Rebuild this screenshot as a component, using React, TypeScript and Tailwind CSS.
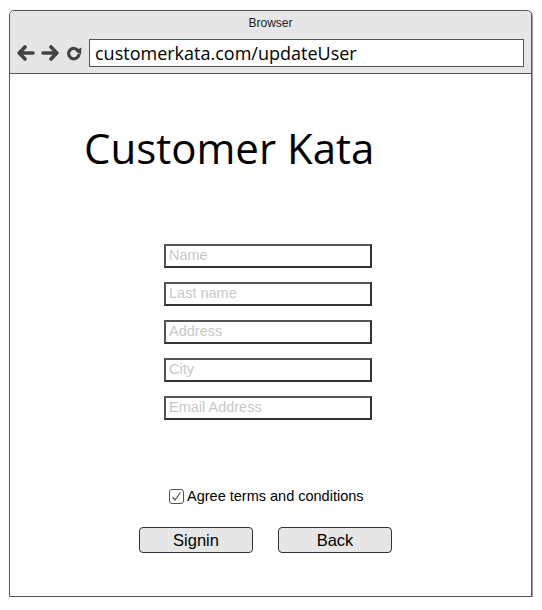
const fields = ["Name", "Last name", "Address", "City", "Email Address"];

function ArrowIcon({ dir }: { dir: "left" | "right" }) {
  return (
    <svg width="18" height="16" viewBox="0 0 18 16" className={dir === "right" ? "-scale-x-100" : ""}>
      <path
        d="M8 2 L2.2 8 L8 14 M3 8 H16"
        fill="none"
        stroke="#444"
        strokeWidth="3.6"
        strokeLinecap="round"
        strokeLinejoin="round"
      />
    </svg>
  );
}

function ReloadIcon() {
  return (
    <svg width="16" height="16" viewBox="0 0 16 16">
      <path
        d="M12.3 6 A5.2 5.2 0 1 0 12.8 10.2"
        fill="none"
        stroke="#444"
        strokeWidth="3.2"
        strokeLinecap="round"
      />
      <path d="M9 5.8 L15.5 2.5 L15 9.5 Z" fill="#444" />
    </svg>
  );
}

export default function App() {
  return (
    <div className="pt-[10px] pl-[9px] font-['Liberation_Sans',Arial,sans-serif]">
      <div className="w-[523px] h-[587px] rounded-t-[5px] border border-[#555] shadow-[1px_1px_1px_#999] bg-white flex flex-col">
        <div className="h-[63px] bg-[#e6e6e6] border-b border-[#555] rounded-t-[5px] flex flex-col">
          <div className="pt-[5px] text-center text-[12px] leading-[14px] text-[#222]">Browser</div>
          <div className="mt-[9px] flex items-center">
            <div className="pl-[7px] flex items-center">
              <ArrowIcon dir="left" />
              <div className="ml-[6px]">
                <ArrowIcon dir="right" />
              </div>
              <div className="ml-[7px]">
                <ReloadIcon />
              </div>
            </div>
            <div className="ml-[7px] w-[435px] h-[28px] bg-white border border-[#555] pl-[5px] flex items-center text-[18px] text-black font-['Open_Sans',sans-serif]">
              customerkata.com/updateUser
            </div>
          </div>
        </div>

        <h1 className="mt-[47px] ml-[74px] text-[42px] leading-[54px] text-black font-['Open_Sans',sans-serif]">
          Customer Kata
        </h1>

        <div className="mt-[69px] ml-[154px] flex flex-col gap-[14px]">
          {fields.map((f) => (
            <div
              key={f}
              className="w-[208px] h-[24px] border-2 border-[#555] border-r-[#333] border-b-[#333] pl-[3px] flex items-center text-[14.5px] text-[#c8c8c8]"
            >
              {f}
            </div>
          ))}
        </div>

        <div className="mt-[66px] ml-[159px] flex items-center gap-[3px] text-[14.5px] text-black">
          <div className="w-[15px] h-[15px] rounded-[3px] border border-[#555] flex items-center justify-center">
            <svg width="11" height="11" viewBox="0 0 11 11">
              <path d="M1.5 6 L4 9 L9.5 1.5" fill="none" stroke="#555" strokeWidth="1.2" />
            </svg>
          </div>
          <span>Agree terms and conditions</span>
        </div>

        <div className="mt-[19px] ml-[129px] flex gap-[25px]">
          <button className="w-[114px] h-[26px] rounded-[4px] border border-[#333] bg-[#e6e6e6] text-[16.5px] text-black">
            Signin
          </button>
          <button className="w-[114px] h-[26px] rounded-[4px] border border-[#333] bg-[#e6e6e6] text-[16.5px] text-black">
            Back
          </button>
        </div>
      </div>
    </div>
  );
}
